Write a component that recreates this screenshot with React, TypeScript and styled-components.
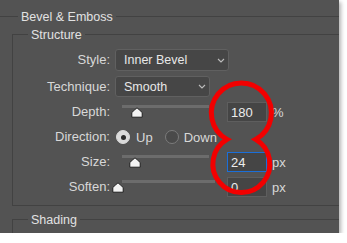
import React from "react";
import styled, { createGlobalStyle } from "styled-components";

const GlobalStyle = createGlobalStyle`
  html, body {
    margin: 0;
    padding: 0;
    background: #ffffff;
  }
  body {
    font-family: "Liberation Sans", Arial, sans-serif;
    font-size: 13px;
    color: #dcdcdc;
  }
`;

const Panel = styled.div`
  position: relative;
  width: 339px;
  height: 233px;
  background: #535353;
  overflow: hidden;
  box-shadow: 2px 2px 4px rgba(0, 0, 0, 0.3);
`;

const Group = styled.fieldset<{ $ml: number; $mt: number }>`
  margin: ${(p) => p.$mt}px 0 0 ${(p) => p.$ml}px;
  padding: 0;
  width: 420px;
  min-width: 0;
  box-sizing: border-box;
  border: 1px solid #424242;
`;

const Legend = styled.legend<{ $ml: number }>`
  margin-left: ${(p) => p.$ml}px;
  padding: 2px 3px 0;
  line-height: 14px;
  font-size: 12.5px;
  color: #e2e2e2;
`;

const Rows = styled.div`
  display: flex;
  flex-direction: column;
  gap: 5px;
  padding: 7px 0 8px 0;
`;

const Row = styled.div`
  display: grid;
  grid-template-columns: 97px auto;
  column-gap: 5px;
  align-items: center;
  min-height: 20px;
`;

const Label = styled.span`
  text-align: right;
  white-space: nowrap;
  line-height: 16px;
  color: #d8d8d8;
`;

const Select = styled.div<{ $w: number; $h: number }>`
  width: ${(p) => p.$w}px;
  height: ${(p) => p.$h}px;
  box-sizing: border-box;
  display: flex;
  align-items: center;
  justify-content: space-between;
  padding: 0 3px 0 8px;
  background: #464646;
  border: 1px solid #606060;
  border-radius: 3px;
  font-size: 12.5px;
  color: #e8e8e8;
`;

const Controls = styled.div`
  display: flex;
  align-items: center;
`;

const SliderArea = styled.div`
  position: relative;
  width: 112px;
  height: 20px;
`;

const Track = styled.div<{ $w: number }>`
  width: ${(p) => p.$w}px;
  height: 3px;
  margin: 3px 0 0 7px;
  background: #6c6c6c;
`;

const Thumb = styled.svg<{ $x: number }>`
  position: absolute;
  top: 5px;
  left: ${(p) => p.$x}px;
`;

const NumBox = styled.div<{ $focus?: boolean }>`
  width: 40px;
  height: 20px;
  box-sizing: border-box;
  padding-left: 3px;
  display: flex;
  align-items: center;
  background: #454545;
  border: 1px solid ${(p) => (p.$focus ? "#1b6fd9" : "#5e5e5e")};
  color: #ececec;
`;

const Unit = styled.span`
  margin-left: 5px;
  color: #d8d8d8;
`;

const Radio = styled.span<{ $on?: boolean; $ml: number }>`
  width: 14px;
  height: 14px;
  margin-left: ${(p) => p.$ml}px;
  box-sizing: border-box;
  border-radius: 50%;
  display: flex;
  align-items: center;
  justify-content: center;
  background: ${(p) => (p.$on ? "#dadada" : "#4a4a4a")};
  border: 1px solid ${(p) => (p.$on ? "#dadada" : "#7c7c7c")};
  &::after {
    content: "";
    display: ${(p) => (p.$on ? "block" : "none")};
    width: 5px;
    height: 5px;
    border-radius: 50%;
    background: #2a2a2a;
  }
`;

const RadioText = styled.span<{ $ml: number }>`
  margin-left: ${(p) => p.$ml}px;
  color: #d8d8d8;
`;

const Shading = styled.div`
  height: 30px;
`;

const Marker = styled.svg`
  position: absolute;
  left: 0;
  top: 0;
  pointer-events: none;
`;

const Chevron = () => (
  <svg width="8" height="5" viewBox="0 0 8 5">
    <path d="M1 1 L4 4 L7 1" fill="none" stroke="#bdbdbd" strokeWidth="1.1" />
  </svg>
);

interface SliderRowProps {
  label: string;
  value: string;
  unit: string;
  thumb: number;
  track: number;
  focus?: boolean;
}

const SliderRow = ({ label, value, unit, thumb, track, focus }: SliderRowProps) => (
  <Row>
    <Label>{label}</Label>
    <Controls>
      <SliderArea>
        <Track $w={track} />
        <Thumb $x={thumb} width="12" height="11" viewBox="0 0 12 11">
          <path
            d="M6 0.8 Q8 2.5 11.2 5.5 L11.2 10.2 L0.8 10.2 L0.8 5.5 Q4 2.5 6 0.8 Z"
            fill="#f2f2f2"
            stroke="#1e1e1e"
            strokeWidth="1"
          />
        </Thumb>
      </SliderArea>
      <NumBox $focus={focus}>{value}</NumBox>
      <Unit>{unit}</Unit>
    </Controls>
  </Row>
);

export default function App() {
  return (
    <>
      <GlobalStyle />
      <Panel>
        <Group $ml={-10} $mt={8}>
          <Legend $ml={27}>Bevel &amp; Emboss</Legend>
          <Group $ml={21} $mt={2}>
            <Legend $ml={15}>Structure</Legend>
            <Rows>
              <Row>
                <Label>Style:</Label>
                <Select $w={114} $h={22}>
                  Inner Bevel
                  <Chevron />
                </Select>
              </Row>
              <Row>
                <Label>Technique:</Label>
                <Select $w={95} $h={21}>
                  Smooth
                  <Chevron />
                </Select>
              </Row>
              <SliderRow label="Depth:" value="180" unit="%" thumb={16} track={87} />
              <Row>
                <Label>Direction:</Label>
                <Controls>
                  <Radio $on $ml={1} />
                  <RadioText $ml={6}>Up</RadioText>
                  <Radio $ml={12} />
                  <RadioText $ml={5}>Down</RadioText>
                </Controls>
              </Row>
              <SliderRow label="Size:" value="24" unit="px" thumb={14} track={87} focus />
              <SliderRow label="Soften:" value="0" unit="px" thumb={-3} track={93} />
            </Rows>
          </Group>
          <Group $ml={21} $mt={5}>
            <Legend $ml={15}>Shading</Legend>
            <Shading />
          </Group>
        </Group>
        <Marker width="339" height="233" viewBox="0 0 339 233">
          <path
            d="M227 139.4 A30 30 0 1 1 255.7 139.4 A28.5 28.5 0 1 1 227 139.4 Z"
            fill="none"
            stroke="#f20000"
            strokeWidth="5"
          />
        </Marker>
      </Panel>
    </>
  );
}
